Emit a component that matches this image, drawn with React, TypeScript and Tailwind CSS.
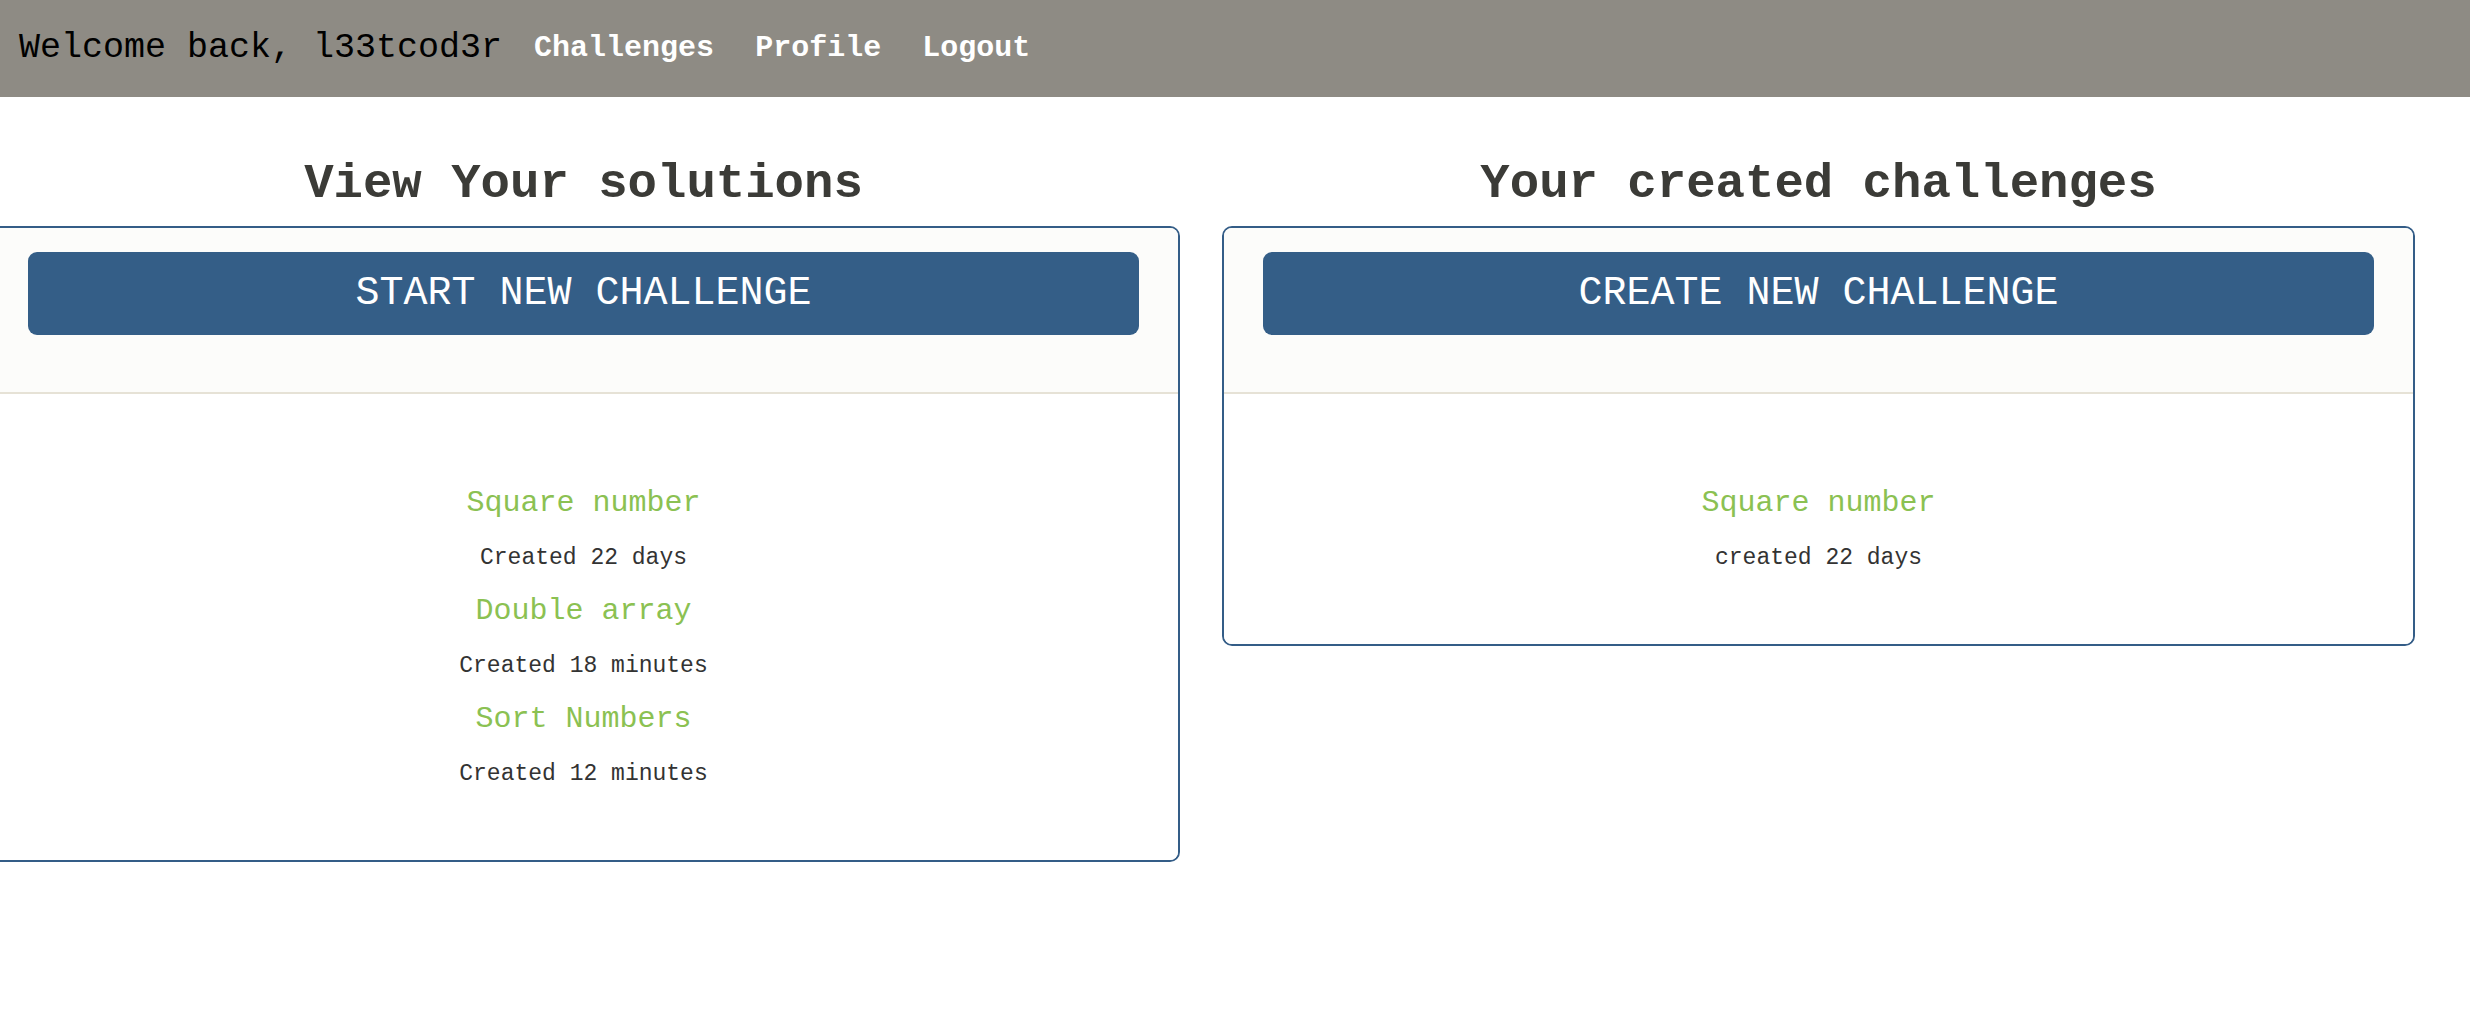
import React from "react";

// ---------- Data ----------
const solutions = [
  { title: "Square number", created: "Created 22 days" },
  { title: "Double array", created: "Created 18 minutes" },
  { title: "Sort Numbers", created: "Created 12 minutes" },
];

const created = [{ title: "Square number", created: "created 22 days" }];

const mono = { fontFamily: '"Liberation Mono", "Courier New", monospace' };

// ---------- Nav ----------
const NavBar: React.FC = () => (
  <div className="h-[97px] w-full bg-[#8e8b84] flex items-center pl-[19px]">
    <span className="text-[35px] text-black mr-[32px]">Welcome back, l33tcod3r</span>
    <div className="flex gap-[41px]">
      {["Challenges", "Profile", "Logout"].map((l) => (
        <a key={l} href="#" className="text-[30px] font-bold text-white">
          {l}
        </a>
      ))}
    </div>
  </div>
);

// ---------- Card ----------
interface CardProps {
  heading: string;
  button: string;
  items: { title: string; created: string }[];
}

const Card: React.FC<CardProps> = ({ heading, button, items }) => (
  <div className="w-[1193px] shrink-0 flex flex-col">
    <h1 className="text-center text-[49px] leading-[52px] font-bold text-[#3b3b37] mb-[16px]">{heading}</h1>
    <div className="border-2 border-[#345d87] rounded-[10px] overflow-hidden">
      <div className="bg-[#fcfcfa] pt-[24px] pb-[57px] px-[39px] border-b-2 border-[#e6e2d6]">
        <button className="w-full h-[83px] rounded-[9px] bg-[#345e87] text-white text-[40px]" style={mono}>
          {button}
        </button>
      </div>
      <div className="bg-white pt-[91px] pb-[72px] flex flex-col items-center text-center">
        {items.map((it, i) => (
          <div key={i} className={i < items.length - 1 ? "mb-[21px]" : ""}>
            <h3 className="text-[30px] leading-[36px] text-[#8bc152] mb-[23px]">{it.title}</h3>
            <p className="text-[23px] leading-[28px] text-[#333333]">{it.created}</p>
          </div>
        ))}
      </div>
    </div>
  </div>
);

// ---------- App ----------
export default function App() {
  return (
    <div className="min-h-screen w-full bg-white overflow-hidden" style={mono}>
      <NavBar />
      <div className="flex gap-[42px] ml-[-13px] pt-[61px]">
        <Card heading="View Your solutions" button="START NEW CHALLENGE" items={solutions} />
        <Card heading="Your created challenges" button="CREATE NEW CHALLENGE" items={created} />
      </div>
    </div>
  );
}
